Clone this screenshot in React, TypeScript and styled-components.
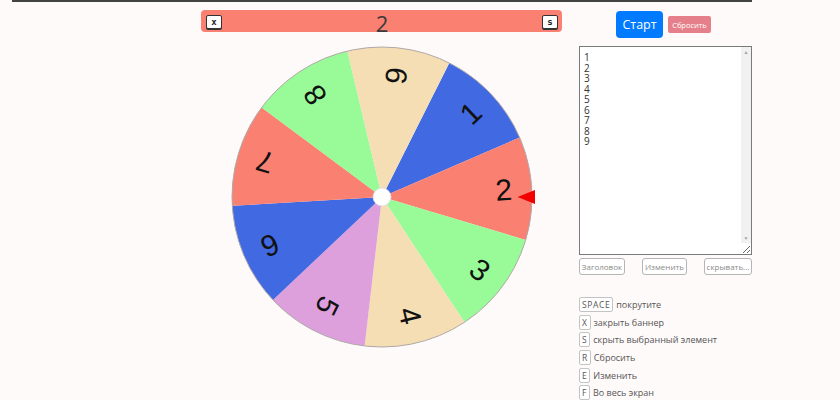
import React from "react";
import styled, { createGlobalStyle } from "styled-components";

const GlobalStyle = createGlobalStyle`
  html, body {
    margin: 0;
    padding: 0;
    background: #fffafa;
    font-family: "Open Sans", "Liberation Sans", sans-serif;
  }
`;

const Page = styled.div`
  margin-left: 12px;
  width: 740px;
  border-top: 2px solid #444;
  display: flex;
  align-items: flex-start;
`;

const LeftColumn = styled.div`
  margin-left: 189px;
  width: 361px;
  padding-top: 8px;
  display: flex;
  flex-direction: column;
  align-items: center;
`;

const Banner = styled.div`
  box-sizing: border-box;
  width: 361px;
  height: 22px;
  background: #fa8072;
  border-radius: 4px;
  padding: 0 4px 0 5px;
  display: flex;
  align-items: center;
  justify-content: space-between;
`;

const BannerKey = styled.span`
  box-sizing: border-box;
  width: 16px;
  height: 14px;
  margin-top: 1px;
  background: #fff;
  border: 1px solid #333;
  border-radius: 2px;
  box-shadow: 0 1px 0 #333;
  font-family: "DejaVu Sans Mono", monospace;
  font-weight: bold;
  font-size: 9px;
  line-height: 12px;
  text-align: center;
  color: #222;
`;

const BannerText = styled.span`
  font-family: "Open Sans", sans-serif;
  font-size: 22px;
  line-height: 22px;
  margin-top: 3px;
  color: #3a3a3a;
`;

const WheelSvg = styled.svg`
  display: block;
  margin-top: 14px;
`;

const RightColumn = styled.div`
  margin-left: 17px;
  width: 173px;
  padding-top: 9px;
  display: flex;
  flex-direction: column;
`;

const Controls = styled.div`
  height: 27px;
  padding-left: 37px;
  display: flex;
  align-items: center;
  gap: 5px;
`;

const StartButton = styled.button`
  width: 47px;
  height: 27px;
  padding: 0;
  border: none;
  border-radius: 4px;
  background: #007bff;
  color: #fff;
  font-family: "Open Sans", sans-serif;
  font-size: 12.5px;
`;

const ResetButton = styled.button`
  width: 43px;
  height: 17px;
  padding: 0;
  border: none;
  border-radius: 2px;
  background: #e5808a;
  color: #fff;
  font-family: "Open Sans", sans-serif;
  font-size: 7.5px;
`;

const AreaWrap = styled.div`
  position: relative;
  margin-top: 8px;
  width: 173px;
  height: 209px;
`;

const ItemsArea = styled.textarea`
  display: block;
  box-sizing: border-box;
  width: 173px;
  height: 209px;
  margin: 0;
  border: 1px solid #7a7a7a;
  padding: 5px 14px 5px 4px;
  background: #fff;
  color: #333;
  font-family: "Open Sans", sans-serif;
  font-size: 10px;
  line-height: 10.5px;
  resize: both;
  outline: none;
`;

/* vertical scroll track drawn over the textarea's right edge */
const ScrollTrack = styled.div`
  position: absolute;
  top: 1px;
  right: 1px;
  width: 10px;
  height: 196px;
  background: #f1f1f1;
  display: flex;
  flex-direction: column;
  justify-content: space-between;
  align-items: center;
  pointer-events: none;
`;

const ScrollArrow = styled.span`
  height: 10px;
  font-size: 5px;
  line-height: 10px;
  color: #a3a3a3;
`;

const ActionRow = styled.div`
  margin-top: 3px;
  display: flex;
  justify-content: space-between;
`;

const ActionButton = styled.button<{ $w: number }>`
  width: ${(p) => p.$w}px;
  height: 17px;
  padding: 0;
  background: #fff;
  border: 1px solid #b5b5b5;
  border-radius: 3px;
  color: #8a8a8a;
  font-family: "Open Sans", sans-serif;
  font-size: 8px;
  white-space: nowrap;
`;

const Shortcuts = styled.ul`
  list-style: none;
  margin: 22px 0 0;
  padding: 0;
  display: flex;
  flex-direction: column;
  gap: 2.7px;
`;

const Shortcut = styled.li`
  height: 15px;
  display: flex;
  align-items: center;
  gap: 3px;
  font-size: 9px;
  color: #555;
`;

const Key = styled.kbd`
  box-sizing: border-box;
  min-width: 11px;
  height: 15px;
  padding: 0 2px;
  border: 1px solid #c4c4c4;
  border-radius: 2px;
  background: #fff;
  font-family: "Open Sans", sans-serif;
  font-size: 8.5px;
  line-height: 13px;
  letter-spacing: 0.6px;
  text-align: center;
  color: #555;
`;

type Segment = { label: string; color: string };

const palette = ["#4169e1", "#fa8072", "#98fb98", "#f5deb3", "#dda0dd"];

const segments: Segment[] = ["1", "2", "3", "4", "5", "6", "7", "8", "9"].map(
  (label, i) => ({ label, color: palette[i % palette.length] })
);

const CX = 155;
const CY = 151;
const R = 150;
const STEP = 40;
// angle (degrees, clockwise from the right) at the middle of segment "2"
const OFFSET = -3.35;

const rad = (d: number) => (d * Math.PI) / 180;

function slicePath(a0: number, a1: number) {
  const x0 = CX + R * Math.cos(rad(a0));
  const y0 = CY + R * Math.sin(rad(a0));
  const x1 = CX + R * Math.cos(rad(a1));
  const y1 = CY + R * Math.sin(rad(a1));
  return `M ${CX} ${CY} L ${x0} ${y0} A ${R} ${R} 0 0 1 ${x1} ${y1} Z`;
}

function Wheel() {
  return (
    <WheelSvg width={310} height={302} viewBox="0 0 310 302">
      {segments.map((s, i) => {
        const mid = OFFSET + (i - 1) * STEP;
        return (
          <path
            key={s.label}
            d={slicePath(mid - STEP / 2, mid + STEP / 2)}
            fill={s.color}
          />
        );
      })}
      <circle cx={CX} cy={CY} r={R} fill="none" stroke="#b0a8a8" strokeWidth={1} />
      {segments.map((s, i) => {
        const mid = OFFSET + (i - 1) * STEP;
        return (
          <text
            key={s.label}
            transform={`translate(${CX} ${CY}) rotate(${mid})`}
            x={122}
            y={0}
            textAnchor="middle"
            dominantBaseline="central"
            fontFamily="'Liberation Sans', Arial, sans-serif"
            fontSize={30}
            fill="#111"
          >
            {s.label}
          </text>
        );
      })}
      <circle cx={CX} cy={CY} r={9} fill="#fff" stroke="#ddd" strokeWidth={0.8} />
      <polygon
        points={`${CX + 135.5},${CY} ${CX + 153},${CY - 7} ${CX + 153},${CY + 7}`}
        fill="#f20000"
      />
    </WheelSvg>
  );
}

const shortcuts = [
  { key: "SPACE", text: "покрутите" },
  { key: "X", text: "закрыть баннер" },
  { key: "S", text: "скрыть выбранный элемент" },
  { key: "R", text: "Сбросить" },
  { key: "E", text: "Изменить" },
  { key: "F", text: "Во весь экран" },
];

export default function App() {
  return (
    <>
      <GlobalStyle />
      <Page>
        <LeftColumn>
          <Banner>
            <BannerKey>x</BannerKey>
            <BannerText>2</BannerText>
            <BannerKey>s</BannerKey>
          </Banner>
          <Wheel />
        </LeftColumn>
        <RightColumn>
          <Controls>
            <StartButton>Старт</StartButton>
            <ResetButton>Сбросить</ResetButton>
          </Controls>
          <AreaWrap>
            <ItemsArea defaultValue={"1\n2\n3\n4\n5\n6\n7\n8\n9"} spellCheck={false} />
            <ScrollTrack>
              <ScrollArrow>▲</ScrollArrow>
              <ScrollArrow>▼</ScrollArrow>
            </ScrollTrack>
          </AreaWrap>
          <ActionRow>
            <ActionButton $w={46}>Заголовок</ActionButton>
            <ActionButton $w={45}>Изменить</ActionButton>
            <ActionButton $w={48}>скрывать...</ActionButton>
          </ActionRow>
          <Shortcuts>
            {shortcuts.map((s) => (
              <Shortcut key={s.key}>
                <Key>{s.key}</Key>
                {s.text}
              </Shortcut>
            ))}
          </Shortcuts>
        </RightColumn>
      </Page>
    </>
  );
}
